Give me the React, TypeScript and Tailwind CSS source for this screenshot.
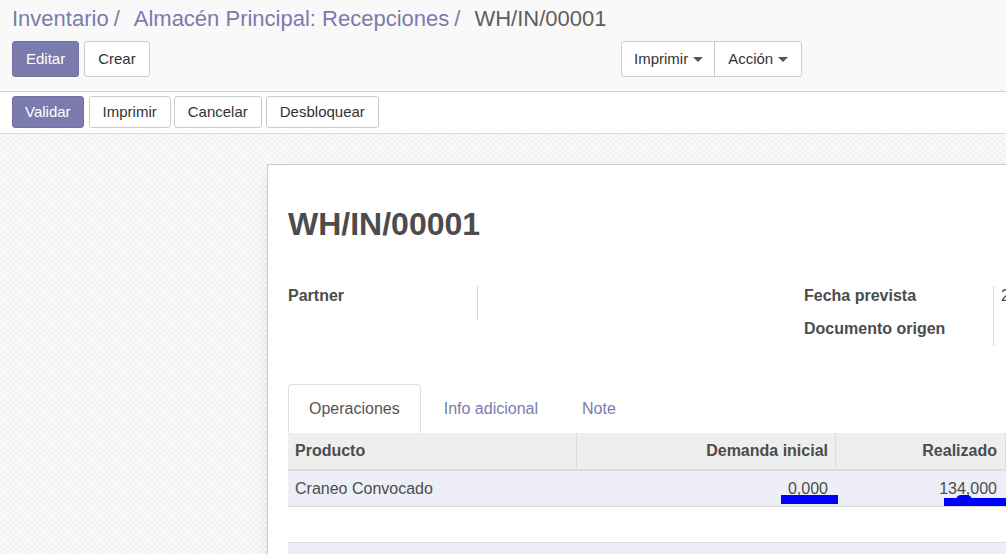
function Caret() {
  return (
    <span className="ml-[5px] inline-block h-0 w-0 border-x-[5px] border-t-[5px] border-x-transparent border-t-[#555] align-middle" />
  );
}

function ControlPanel() {
  return (
    <div className="border-b border-[#cfcfcf] bg-[#f9f9f9] px-3 pb-[14px] pt-[6px]">
      <div className="flex text-[22px] leading-[26px]">
        <span className="text-[#7c7bad]">Inventario</span>
        <span className="ml-[5px] mr-[14px] text-[#7c7bad]">/</span>
        <span className="text-[#7c7bad]">Almacén Principal: Recepciones</span>
        <span className="ml-[5px] mr-[14px] text-[#7c7bad]">/</span>
        <span className="text-[#5f5f5f]">WH/IN/00001</span>
      </div>
      <div className="mt-[9px] flex h-[36px]">
        <div className="flex w-[609px] gap-[5px]">
          <button className="rounded-[3px] border border-[#7473a6] bg-[#7c7bad] px-[13px] text-[15px] text-white">Editar</button>
          <button className="rounded-[3px] border border-[#cccccc] bg-white px-[13px] text-[15px] text-[#333]">Crear</button>
        </div>
        <div className="flex rounded-[3px] border border-[#cccccc] bg-white text-[15px] text-[#333]">
          <button className="flex items-center border-r border-[#cccccc] pl-[12px] pr-[11px]">
            Imprimir
            <Caret />
          </button>
          <button className="flex items-center pl-[13px] pr-[13px]">
            Acción
            <Caret />
          </button>
        </div>
      </div>
    </div>
  );
}

function StatusBar() {
  return (
    <div className="flex h-[42px] items-start border-b border-[#d9d9d9] bg-white px-3 pt-[4px] text-[15px]">
      <button className="h-[32px] rounded-[3px] border border-[#7473a6] bg-[#7c7bad] px-[12px] text-white">Validar</button>
      <button className="ml-[5px] h-[32px] rounded-[3px] border border-[#cccccc] bg-white px-[13px] text-[#333]">Imprimir</button>
      <button className="ml-[3px] h-[32px] rounded-[3px] border border-[#cccccc] bg-white px-[13px] text-[#333]">Cancelar</button>
      <button className="ml-[4px] h-[32px] rounded-[3px] border border-[#cccccc] bg-white px-[13px] text-[#333]">Desbloquear</button>
    </div>
  );
}

function Sheet() {
  return (
    <div className="w-[900px] border border-[#cbcbd3] bg-white pl-[20px] pt-[40px] shadow-[0_5px_20px_-12px_rgba(0,0,0,0.4)]">
      <h1 className="text-[32px] font-bold leading-[38px] text-[#4c4c4c]">WH/IN/00001</h1>

      <div className="mt-[43px] flex text-[16px] leading-[20px] text-[#4c4c4c]">
        <div className="flex w-[516px]">
          <div className="w-[189px] font-bold">Partner</div>
          <div className="h-[35px] border-l border-[#d8d8d8]" />
        </div>
        <div className="flex">
          <div className="w-[189px] font-bold">
            <div className="h-[33px]">Fecha prevista</div>
            <div className="h-[27px]">Documento origen</div>
          </div>
          <div className="h-[60px] border-l border-[#d8d8d8] pl-[7px]">20/03/2019 10:12:45</div>
        </div>
      </div>

      <div className="mt-[38px] flex text-[16px]">
        <div className="mr-[2px] flex h-[49px] items-center rounded-t-[4px] border border-b-0 border-[#dddddd] px-[20px] text-[#555]">Operaciones</div>
        <div className="mr-[2px] flex h-[49px] items-center border border-transparent px-[20px] text-[#7c7bad]">Info adicional</div>
        <div className="flex h-[49px] items-center border border-transparent px-[20px] text-[#7c7bad]">Note</div>
      </div>

      <div className="text-[16px] text-[#4c4c4c]">
        <div className="flex h-[38px] border-b-2 border-[#dcdcdc] bg-[#eeeeee] font-bold">
          <div className="flex w-[288px] items-center pl-[7px]">Producto</div>
          <div className="flex w-[259px] items-center justify-end border-l border-[#dddddd] pr-[7px]">Demanda inicial</div>
          <div className="flex w-[170px] items-center justify-end border-l border-[#dddddd] pr-[8px]">Realizado</div>
          <div className="flex-1 border-l border-[#dddddd]" />
        </div>
        <div className="relative flex h-[36px] border-b border-[#dcdcdc] bg-[#eeeef6]">
          <div className="flex w-[288px] items-center pl-[7px]">Craneo Convocado</div>
          <div className="flex w-[259px] items-center justify-end pr-[7px]">
            <span className="underline decoration-[#aaa] underline-offset-[3px]">0,000</span>
          </div>
          <div className="flex w-[170px] items-center justify-end pr-[8px]">134,000</div>
          <span className="absolute left-[493px] top-[24px] h-[9px] w-[57px] bg-[#0000ff]" />
          <span className="absolute left-[656px] top-[27px] h-[8px] w-[80px] bg-[#0000ff]" />
          <span className="absolute left-[668px] top-[24px] h-[5px] w-[16px] rounded-t-full bg-[#0000ff]" />
        </div>
        <div className="h-[35px]" />
        <div className="h-[40px] border-t border-[#dcdcdc] bg-[#eeeef6]" />
      </div>
    </div>
  );
}

export default function App() {
  return (
    <div className="flex h-[554px] w-[1006px] flex-col overflow-hidden font-['Liberation_Sans',Arial,sans-serif] text-[#4c4c4c]">
      <ControlPanel />
      <StatusBar />
      <div className="flex-1 overflow-hidden bg-[#f6f6f6] bg-[repeating-conic-gradient(#f3f3f3_0%_25%,#fafafa_0%_50%)] bg-[length:6px_6px] pl-[267px] pt-[30px]">
        <Sheet />
      </div>
    </div>
  );
}
